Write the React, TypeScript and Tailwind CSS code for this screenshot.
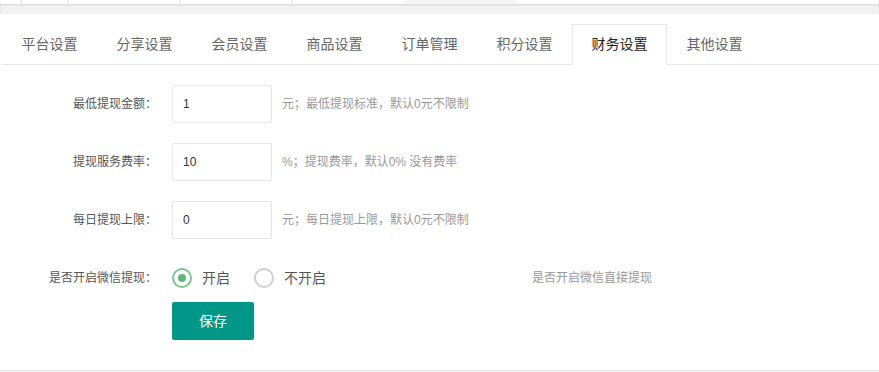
import React, { useState } from "react";

const tabs = ["平台设置", "分享设置", "会员设置", "商品设置", "订单管理", "积分设置", "财务设置", "其他设置"];

const fields = [
  { label: "最低提现金额：", value: "1", tip: "元；最低提现标准，默认0元不限制" },
  { label: "提现服务费率：", value: "10", tip: "%；提现费率，默认0% 没有费率" },
  { label: "每日提现上限：", value: "0", tip: "元；每日提现上限，默认0元不限制" },
];

function Radio({ checked, label, onClick }: { checked: boolean; label: string; onClick: () => void }) {
  return (
    <button onClick={onClick} className="flex items-center">
      <span
        className={`w-[20px] h-[20px] rounded-full border-2 flex items-center justify-center ${
          checked ? "border-[#7cc48f]" : "border-[#cfcfcf]"
        }`}
      >
        {checked && <span className="w-[8px] h-[8px] rounded-full bg-[#5fb878]" />}
      </span>
      <span className="ml-[10px] text-[14px] text-[#555]">{label}</span>
    </button>
  );
}

export default function App() {
  const [active, setActive] = useState(6);
  const [wechat, setWechat] = useState(true);

  return (
    <div
      className="w-[879px] h-[372px] bg-white overflow-hidden"
      style={{ fontFamily: '"Liberation Sans", "Noto Sans CJK SC", sans-serif' }}
    >
      {/* top nav remnants */}
      <div className="h-[4px] flex">
        <div className="w-[22px] border-r border-[#ececec]" />
        <div className="w-[46px] border-r border-[#ececec]" />
        <div className="w-[112px] border-r border-[#ececec]" />
        <div className="w-[112px] border-r border-[#ececec]" />
        <div className="w-[112px]" />
        <div className="w-[113px] bg-[#f5f5f5]" />
        <div className="flex-1 border-r border-[#ececec]" />
      </div>
      <div className="h-[10px] bg-[#f2f2f2] shadow-[inset_0_1px_2px_rgba(0,0,0,0.12)]" />

      {/* card */}
      <div className="h-[357px] border-b border-[#e6e6e6] pt-[10px]">
        <div className="ml-[2px] flex h-[41px] border-b border-[#e6e6e6]">
          {tabs.map((t, i) => (
            <button
              key={t}
              onClick={() => setActive(i)}
              className={`w-[95px] h-[41px] text-[14px] flex items-center justify-center ${
                active === i
                  ? "bg-white border border-[#e6e6e6] border-b-white text-[#222]"
                  : "text-[#666]"
              }`}
            >
              {t}
            </button>
          ))}
        </div>

        <div className="pt-[20px]">
          {fields.map((f) => (
            <div key={f.label} className="flex items-center h-[38px] mb-[20px]">
              <div className="w-[157px] text-right text-[12px] text-[#555]">{f.label}</div>
              <input
                defaultValue={f.value}
                className="ml-[15px] w-[100px] h-[38px] border border-[#e6e6e6] rounded-[2px] px-[10px] text-[12px] text-[#333] outline-none"
              />
              <div className="ml-[10px] text-[12px] text-[#999]">{f.tip}</div>
            </div>
          ))}

          <div className="flex items-center h-[38px]">
            <div className="w-[157px] text-right text-[12px] text-[#555]">是否开启微信提现：</div>
            <div className="ml-[15px] w-[360px] flex items-center">
              <Radio checked={wechat} label="开启" onClick={() => setWechat(true)} />
              <div className="ml-[24px]">
                <Radio checked={!wechat} label="不开启" onClick={() => setWechat(false)} />
              </div>
            </div>
            <div className="text-[12px] text-[#999]">是否开启微信直接提现</div>
          </div>

          <div className="ml-[172px] mt-[5px]">
            <button className="w-[82px] h-[38px] rounded-[2px] bg-[#009688] text-white text-[14px]">保存</button>
          </div>
        </div>
      </div>
      <div className="h-[1px] bg-[#f2f2f2]" />
    </div>
  );
}
